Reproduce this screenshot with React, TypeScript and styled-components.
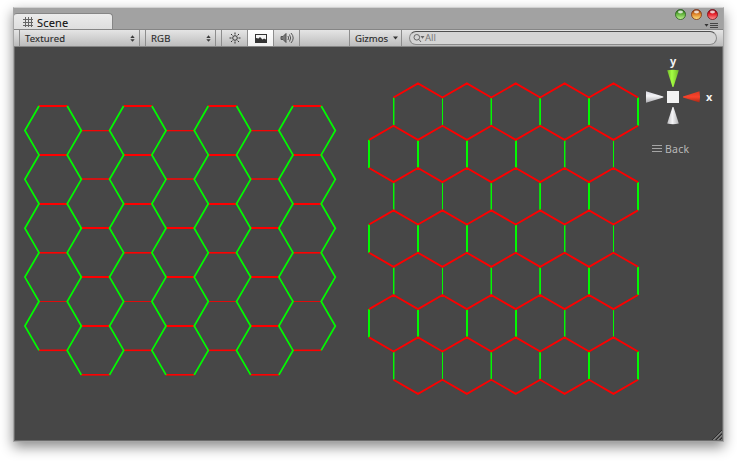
import React from "react";
import styled, { createGlobalStyle } from "styled-components";

const Global = createGlobalStyle`
  * { box-sizing: border-box; }
  body { margin: 0; background: #fff; overflow: hidden; font-family: "Noto Sans", "Open Sans", sans-serif; }
  svg { display: block; }
`;

const Page = styled.main`
  height: 461px;
  padding: 7px 13px 19px;
`;
const Window = styled.section`
  display: flex;
  flex-direction: column;
  width: 711px;
  height: 435px;
  border: 1px solid #a6a6a6;
  border-top-color: #d0d0d0;
  background: #474747;
  box-shadow: 0 5px 12px rgba(0, 0, 0, 0.46);
`;
const TitleBar = styled.header`
  display: flex;
  justify-content: space-between;
  height: 21px;
  flex: none;
  background: #a2a2a2;
`;
const Tab = styled.div`
  display: flex;
  align-items: center;
  gap: 3px;
  width: 99px;
  height: 16px;
  margin-top: 5px;
  padding: 1px 0 0 8px;
  border-top: 1px solid #868686;
  border-right: 1px solid #868686;
  border-radius: 3px 4px 0 0;
  background: linear-gradient(#ececec, #dedede);
  color: #111;
  font-size: 11px;
  line-height: 14px;
`;
const TabLabel = styled.span`
  padding-top: 2px;
  letter-spacing: 0.2px;
  -webkit-text-stroke: 0.1px #111;
`;
const Controls = styled.div`
  display: flex;
  flex-direction: column;
  align-items: flex-end;
  padding: 1px 4px 0 0;
`;
const Toolbar = styled.div`
  display: flex;
  flex: none;
  height: 18px;
  padding-left: 5px;
  border-top: 1px solid #858585;
  border-bottom: 1px solid #858585;
  background: linear-gradient(#e5e5e5, #bcbcbc);
  color: #2a2a2a;
  font-size: 9.5px;
`;
const Segment = styled.div<{ $w: number; $left?: boolean; $on?: boolean }>`
  display: flex;
  align-items: center;
  justify-content: center;
  width: ${(p) => p.$w}px;
  border-right: 1px solid #8d8d8d;
  border-left: ${(p) => (p.$left ? "1px solid #8d8d8d" : "0")};
  background: ${(p) => (p.$on ? "linear-gradient(#fff, #f0f0f0)" : "transparent")};
`;
const Dropdown = styled(Segment)<{ $tight?: boolean }>`
  justify-content: space-between;
  padding: 1px ${(p) => (p.$tight ? 3 : 4)}px 0 5px;
  line-height: 14px;
  letter-spacing: ${(p) => (p.$tight ? 0 : 0.15)}px;
  -webkit-text-stroke: 0.12px #2a2a2a;
`;
const Gap = styled.div<{ $w: number }>`
  width: ${(p) => p.$w}px;
`;
const Search = styled.div`
  display: flex;
  align-items: center;
  width: 308px;
  height: 14px;
  margin: 1px 0 0 7px;
  padding-left: 3px;
  border: 1px solid #8a8a8a;
  border-top-color: #4f4f4f;
  border-radius: 7px;
  background: #d5d5d5;
  color: #777;
  font-size: 9.5px;
  line-height: 12px;
`;
const Viewport = styled.div`
  flex: 1;
  min-height: 0;
  border: solid #6b6b6b;
  border-width: 0 1px 1px 0;
  overflow: hidden;
`;

const S = 28.22;
const H = 24.44;
const pts = (list: number[][]) => list.map((p) => p.join(",")).join(" ");

// y, thickness and colour of the horizontal edges, from top to bottom
const flatRows: [number, number, string][] = [
  [105, 2, "#ff0000"],
  [130, 1.3, "#f60505"],
  [154, 2, "#ff0000"],
  [178, 2, "#d01414"],
  [203, 2, "#ff0000"],
  [227, 2, "#ff0000"],
  [252, 1.6, "#ff0000"],
  [276, 2, "#ff0000"],
  [301, 1, "#e00c0c"],
  [325, 2, "#ff0000"],
  [349.5, 1.6, "#ff0000"],
  [374, 1.6, "#ff0000"],
];

function FlatGrid() {
  const edges: React.ReactNode[] = [];
  flatRows.forEach(([y, h, c], r) => {
    for (let col = r % 2; col < 7; col += 2) {
      edges.push(<rect key={`h${r}-${col}`} x={39 + col * S * 1.5} y={y} width={S} height={h} fill={c} />);
    }
  });
  for (let i = 0; i < 8; i++) {
    const even = i % 2 === 0;
    const inner = 39 + i * S * 1.5 - (even ? 0 : S / 2);
    const outer = even ? inner - S / 2 : inner + S / 2;
    const last = i === 0 || i === 7 ? 10 : 11;
    const line: number[][] = [];
    for (let r = 0; r <= last; r++) line.push([r % 2 === 0 ? inner : outer, 106 + r * H]);
    edges.push(<polyline key={`z${i}`} points={pts(line)} fill="none" stroke="#00fa00" strokeWidth="1.75" />);
  }
  return <g>{edges}</g>;
}

// x, width and side of the fainter neighbouring column
const evenBars = [[393, 1, 1], [442, 1, 0], [491, 1, -1], [539.2, 1.8, 0], [588, 2, 0], [637, 2, 0]];
const oddBars = [[368, 2, 0], [417, 2, 0], [466, 2, 0], [515, 2, 0], [564, 1, 1], [613, 1, 0]];

function PointyGrid() {
  const parts: React.ReactNode[] = [];
  for (let r = 0; r < 7; r++) {
    const y = 97.5 + r * S * 1.5;
    (r % 2 ? oddBars : evenBars).forEach(([x, w, shade], i) => {
      parts.push(<rect key={`b${r}-${i}`} x={x} y={y} width={w} height={S} fill="#00fa00" />);
      if (shade) parts.push(<rect key={`s${r}-${i}`} x={x + shade} y={y} width="1" height={S} fill="#2d952d" />);
    });
  }
  for (let r = 0; r < 8; r++) {
    const low = 97.5 + r * S * 1.5;
    const line: number[][] = [];
    for (let i = r === 0 || r === 7 ? 1 : 0; i <= 11; i++) {
      line.push([369.1 + i * H, (i + r) % 2 === 0 ? low - S / 2 : low]);
    }
    if (r === 7) line.forEach((p, i) => { p[1] = i % 2 === 0 ? low - S / 2 : low; });
    parts.push(<polyline key={`r${r}`} points={pts(line)} fill="none" stroke="#fd0000" strokeWidth="1.85" />);
  }
  return <g>{parts}</g>;
}

function SceneView() {
  return (
    <svg width="709" height="394" viewBox="14 47 709 394" fontFamily="Noto Sans, sans-serif">
      <defs>
        <linearGradient id="white">
          <stop offset="0" stopColor="#bcbcbf" />
          <stop offset=".45" stopColor="#f4f4f6" />
          <stop offset="1" stopColor="#b2b2b4" />
        </linearGradient>
        <linearGradient id="side" x2="0" y2="1">
          <stop offset="0" stopColor="#d6d6df" />
          <stop offset=".4" stopColor="#f4f4f6" />
          <stop offset="1" stopColor="#aaaaae" />
        </linearGradient>
        <linearGradient id="lime">
          <stop offset="0" stopColor="#71b82a" />
          <stop offset=".4" stopColor="#a5ff43" />
          <stop offset="1" stopColor="#72b829" />
        </linearGradient>
        <linearGradient id="scarlet" x2="0" y2="1">
          <stop offset="0" stopColor="#d83922" />
          <stop offset=".5" stopColor="#f8432b" />
          <stop offset="1" stopColor="#a52815" />
        </linearGradient>
      </defs>
      <path d="M14.5 47V441" stroke="#6b6b6b" />
      <FlatGrid />
      <PointyGrid />
      <path d="M667.2 70.2q5.8-1 11.6 0L673.5 87h-1z" fill="url(#lime)" />
      <path d="M672.5 107h1l5.3 16.5q-5.8 1.5-11.6 0z" fill="url(#white)" />
      <path d="M646 91.3L663.3 96.5v1L646 102.8z" fill="url(#side)" />
      <path d="M699.5 91.3L683 96.5v1L699.5 102.5q1-5.5 0-11.2z" fill="url(#scarlet)" />
      <rect x="667" y="91" width="12" height="12" fill="#f3f3f3" />
      <text x="669.9" y="65" fontSize="11" fontWeight="700" fill="#f4f4f4">y</text>
      <text x="706" y="101" fontSize="11" fontWeight="700" fill="#f4f4f4">x</text>
      <path d="M652 145.5h10M652 148.5h10M652 151.5h10" stroke="#a5a5a5" />
      <text x="665" y="153" fontSize="10.5" fill="#b8b8b8" textLength="24">Back</text>
      <path d="M712 440L722 430M716 440L722 434M720 440L722 438" stroke="#2c2c2c" strokeWidth="1" />
      <path d="M713 440.5L722.5 431M717 440.5L722.5 435M721 440.5L722.5 439" stroke="#b8b8b8" strokeWidth=".9" />
    </svg>
  );
}

const lights = [
  ["#245c1c", "#62b53c", "#c6f597"],
  ["#7c3115", "#df8126", "#ffe984"],
  ["#760b16", "#e72029", "#ff9a99"],
];

function WindowLights() {
  return (
    <svg width="45" height="20" viewBox="674 9 45 20">
      <defs>
        {lights.map(([edge, mid, low], i) => (
          <linearGradient id={`light${i}`} key={mid} x2="0" y2="1">
            <stop offset="0" stopColor={edge} />
            <stop offset=".45" stopColor={mid} />
            <stop offset="1" stopColor={low} />
          </linearGradient>
        ))}
      </defs>
      {lights.map(([edge], i) => (
        <g key={edge}>
          <circle cx={680.5 + i * 16} cy="14.5" r="5" fill={`url(#light${i})`} stroke={edge} strokeWidth=".8" />
          <ellipse cx={680.5 + i * 16} cy="12" rx="2.5" ry="1.4" fill="#fff" opacity=".75" />
        </g>
      ))}
      <path d="M704.5 24h4l-2 2.7z" fill="#333" />
      <path d="M710 23.5h8M710 25.5h8M710 27.5h8" stroke="#444" />
    </svg>
  );
}

const Updown = () => (
  <svg width="5" height="7" viewBox="0 0 5 7">
    <path d="M.3 3L2.5 .3 4.7 3zM.3 4.2h4.4L2.5 6.8z" fill="#3a3a3a" />
  </svg>
);

export default function App() {
  return (
    <Page>
      <Global />
      <Window>
        <TitleBar>
          <Tab>
            <svg width="12" height="12" viewBox="0 0 12 12">
              <path d="M3.5 1v10M6.5 1v10M9.5 1v10M1 3.5h10M1 6.5h10M1 9.5h10" stroke="#666" />
            </svg>
            <TabLabel>Scene</TabLabel>
          </Tab>
          <Controls>
            <WindowLights />
          </Controls>
        </TitleBar>
        <Toolbar>
          <Dropdown $w={121} $left>Textured<Updown /></Dropdown>
          <Gap $w={5} />
          <Dropdown $w={71} $left>RGB<Updown /></Dropdown>
          <Gap $w={5} />
          <Segment $w={27} $left>
            <svg width="12" height="12" viewBox="0 0 12 12" fill="none" stroke="#333">
              <circle cx="6" cy="6" r="2.3" />
              <path d="M6 .5v2M6 9.5v2M.5 6h2M9.5 6h2M2 2l1.4 1.4M8.6 8.6L10 10M10 2L8.6 3.4M3.4 8.6L2 10" />
            </svg>
          </Segment>
          <Segment $w={26} $on>
            <svg width="12" height="9" viewBox="0 0 12 9">
              <path d="M0 0h12v9H0z" fill="#333" />
              <path d="M1 1h10v4.5L9 4.5 7.5 5.5 5 3 3.5 4.5 1 4z" fill="#f5f5f5" />
            </svg>
          </Segment>
          <Segment $w={26}>
            <svg width="14" height="12" viewBox="0 0 14 12" fill="none" stroke="#555">
              <path d="M1 4.5h2L6 1.5v9l-3-3H1z" fill="#777" />
              <path d="M8 4q1.2 2 0 4M9.5 2.5q2.4 3.5 0 7M11 1q4.4 5 0 10" />
            </svg>
          </Segment>
          <Segment $w={50} />
          <Dropdown $w={52} $tight>
            Gizmos
            <svg width="5" height="8" viewBox="0 0 5 8"><path d="M0 1.5h5L2.5 4.5z" fill="#333" /></svg>
          </Dropdown>
          <Search>
            <svg width="12" height="10" viewBox="0 0 12 10" fill="none" stroke="#666">
              <circle cx="3.8" cy="4.3" r="2.8" />
              <path d="M6 6.5L8 9" />
              <path d="M7.5 3h4L9.5 5.7z" fill="#666" stroke="none" />
            </svg>
            All
          </Search>
        </Toolbar>
        <Viewport>
          <SceneView />
        </Viewport>
      </Window>
    </Page>
  );
}
